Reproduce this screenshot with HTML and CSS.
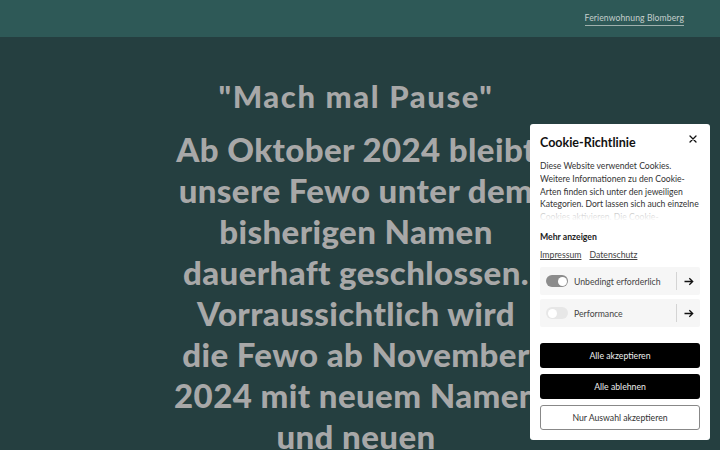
FILE: index.html
```html
<!DOCTYPE html>
<html lang="de">
<head>
<meta charset="utf-8">
<title>Ferienwohnung Blomberg</title>
<link rel="stylesheet" href="styles.css">
</head>
<body>
<header class="topbar">
  <a class="brand" href="#">Ferienwohnung Blomberg</a>
</header>
<main class="hero">
  <h1 class="hero-title">"Mach mal Pause"</h1>
  <p class="hero-text">Ab Oktober 2024 bleibt<br>unsere Fewo unter dem<br>bisherigen Namen<br>dauerhaft geschlossen.<br>Vorraussichtlich wird<br>die Fewo ab November<br>2024 mit neuem Namen<br>und neuen</p>
</main>
<aside class="cookie">
  <div class="cookie-head">
    <h2 class="cookie-title">Cookie-Richtlinie</h2>
    <button class="cookie-close" aria-label="Schließen">
      <svg width="8" height="8" viewBox="0 0 8 8"><path d="M1 1L7 7M7 1L1 7" stroke="#111" stroke-width="1.3" fill="none" stroke-linecap="round"/></svg>
    </button>
  </div>
  <div class="cookie-desc">
    <p>Diese Website verwendet Cookies.<br>Weitere Informationen zu den Cookie-<br>Arten finden sich unter den jeweiligen<br>Kategorien. Dort lassen sich auch einzelne<br>Cookies aktivieren. Die Cookie-</p>
    <div class="cookie-fade"></div>
  </div>
  <div class="cookie-more">Mehr anzeigen</div>
  <div class="cookie-links">
    <a href="#">Impressum</a>
    <a href="#">Datenschutz</a>
  </div>
  <div class="cookie-cats">
    <div class="cat">
      <span class="toggle on"><span class="knob"></span></span>
      <span class="cat-label">Unbedingt erforderlich</span>
      <span class="cat-arrow">
        <svg width="10" height="9" viewBox="0 0 10 9"><path d="M0.5 4.5H8.5M5.3 1.2L8.7 4.5L5.3 7.8" stroke="#111" stroke-width="1.3" fill="none"/></svg>
      </span>
    </div>
    <div class="cat">
      <span class="toggle"><span class="knob"></span></span>
      <span class="cat-label">Performance</span>
      <span class="cat-arrow">
        <svg width="10" height="9" viewBox="0 0 10 9"><path d="M0.5 4.5H8.5M5.3 1.2L8.7 4.5L5.3 7.8" stroke="#111" stroke-width="1.3" fill="none"/></svg>
      </span>
    </div>
  </div>
  <div class="cookie-actions">
    <button class="btn btn-dark">Alle akzeptieren</button>
    <button class="btn btn-dark">Alle ablehnen</button>
    <button class="btn btn-light">Nur Auswahl akzeptieren</button>
  </div>
</aside>
</body>
</html>
```
FILE: styles.css
```css
* { box-sizing: border-box; }
html, body { margin: 0; padding: 0; }
body {
  background: #253f40;
  font-family: "Lato", "Noto Sans", sans-serif;
  width: 720px;
  height: 450px;
  overflow: hidden;
}
.topbar {
  height: 37px;
  background: #2e5957;
  display: flex;
  justify-content: flex-end;
  align-items: flex-start;
  padding: 12px 36px 0 0;
}
.brand {
  color: #c5cfcd;
  font-family: "Lato", sans-serif;
  font-size: 8.6px;
  letter-spacing: 0.1px;
  text-decoration: none;
  border-bottom: 1px solid #9fb0ad;
  padding-bottom: 1px;
  line-height: 12px;
}
.hero {
  width: 420px;
  margin: 0 0 0 146px;
  text-align: center;
  color: #a8a8a8;
  font-family: "Lato", sans-serif;
  font-weight: 900;
}
.hero-title {
  margin: 36px 0 0;
  font-size: 31px;
  line-height: 46px;
  font-weight: 900;
  letter-spacing: 1.6px;
  white-space: nowrap;
}
.hero-text {
  margin: 10px 0 0;
  font-size: 33px;
  line-height: 41px;
  letter-spacing: 0.4px;
  white-space: nowrap;
}
.cookie {
  position: fixed;
  left: 530px;
  top: 124px;
  width: 180px;
  height: 316px;
  background: #fff;
  border-radius: 3px;
  padding: 10px 10px 10px;
  font-family: "Lato", "Noto Sans", sans-serif;
  color: #333;
  display: flex;
  flex-direction: column;
}
.cookie-head {
  display: flex;
  justify-content: space-between;
  align-items: flex-start;
}
.cookie-title {
  margin: 1px 0 0;
  font-size: 12.5px;
  font-weight: 700;
  color: #111;
  line-height: 16px;
}
.cookie-close {
  border: 0;
  background: none;
  padding: 0;
  margin: 0 2px 0 0;
  width: 10px;
  height: 10px;
  display: flex;
  align-items: center;
  justify-content: center;
}
.cookie-desc {
  position: relative;
  margin-top: 9px;
  height: 61px;
  overflow: hidden;
}
.cookie-desc p {
  margin: 0;
  font-size: 8.6px;
  line-height: 12.8px;
  color: #333;
  white-space: nowrap;
}
.cookie-fade {
  position: absolute;
  left: 0;
  right: 0;
  bottom: 0;
  height: 12px;
  background: linear-gradient(rgba(255,255,255,0.6), #fff);
}
.cookie-more {
  margin-top: 10px;
  font-size: 8.7px;
  font-weight: 700;
  color: #222;
  line-height: 12px;
}
.cookie-links {
  margin-top: 6px;
  display: flex;
  gap: 8px;
  line-height: 12px;
}
.cookie-links a {
  font-size: 8.7px;
  color: #444;
  text-decoration: underline;
  text-underline-offset: 1px;
}
.cookie-cats {
  margin-top: 6px;
  display: flex;
  flex-direction: column;
  gap: 4px;
}
.cat {
  height: 28px;
  background: #f6f6f6;
  border-radius: 2px;
  display: flex;
  align-items: center;
  padding: 0 6px;
}
.toggle {
  width: 22px;
  height: 12px;
  border-radius: 6px;
  background: #e7e7e7;
  position: relative;
  flex: none;
}
.toggle .knob {
  position: absolute;
  top: 1.5px;
  left: 1.5px;
  width: 9px;
  height: 9px;
  border-radius: 50%;
  background: #fff;
}
.toggle.on { background: #8c8c8c; }
.toggle.on .knob { left: 11.5px; }
.cat-label {
  margin-left: 6px;
  font-size: 8.7px;
  color: #444;
  flex: 1;
}
.cat-arrow {
  height: 18px;
  border-left: 1px solid #d4d4d4;
  padding-left: 7px;
  display: flex;
  align-items: center;
}
.cookie-actions {
  margin-top: 16px;
  display: flex;
  flex-direction: column;
  gap: 6px;
}
.btn {
  height: 25px;
  border-radius: 3px;
  font-family: "Lato", "Noto Sans", sans-serif;
  font-size: 8.7px;
  padding: 0;
}
.btn-dark {
  background: #000;
  color: #eee;
  border: 0;
}
.btn-light {
  background: #fff;
  color: #333;
  border: 1px solid #888;
}
```
